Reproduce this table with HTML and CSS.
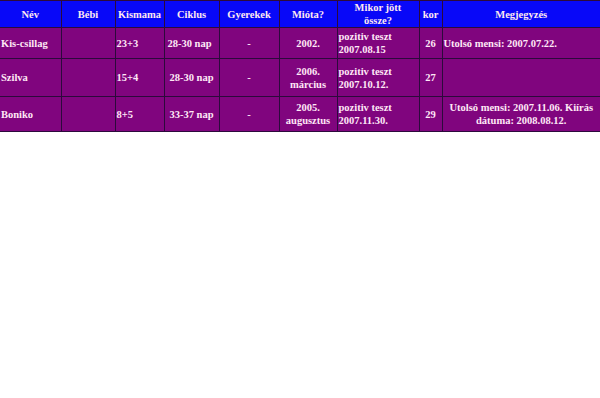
FILE: index.html
```html
<!DOCTYPE html>
<html lang="hu">
<head>
<meta charset="utf-8">
<title>Kismamák</title>
<link rel="stylesheet" href="styles.css">
</head>
<body>
<table class="tbl">
  <colgroup>
    <col class="c-nev"><col class="c-bebi"><col class="c-kis"><col class="c-cik"><col class="c-gyer"><col class="c-mio"><col class="c-mikor"><col class="c-kor"><col class="c-megj">
  </colgroup>
  <thead>
    <tr class="hrow">
      <th>Név</th><th>Bébi</th><th>Kismama</th><th>Ciklus</th><th>Gyerekek</th><th>Mióta?</th><th>Mikor jött<br>össze?</th><th>kor</th><th>Megjegyzés</th>
    </tr>
  </thead>
  <tbody>
    <tr class="r1">
      <td>Kis-csillag</td><td></td><td>23+3</td><td class="ind">28-30 nap</td><td class="ctr">-</td><td class="ctr">2002.</td><td>pozitiv teszt<br>2007.08.15</td><td class="ctr">26</td><td>Utolsó mensi: 2007.07.22.</td>
    </tr>
    <tr class="r2">
      <td>Szilva</td><td></td><td>15+4</td><td class="ctr">28-30 nap</td><td class="ctr">-</td><td class="ctr">2006.<br>március</td><td>pozitiv teszt<br>2007.10.12.</td><td class="ctr">27</td><td></td>
    </tr>
    <tr class="r3">
      <td>Boniko</td><td></td><td>8+5</td><td class="ctr">33-37 nap</td><td class="ctr">-</td><td class="ctr">2005.<br>augusztus</td><td>pozitiv teszt<br>2007.11.30.</td><td class="ctr">29</td><td class="ctr">Utolsó mensi: 2007.11.06. Kiírás dátuma: 2008.08.12.</td>
    </tr>
  </tbody>
</table>
</body>
</html>
```
FILE: styles.css
```css
html, body {
  margin: 0;
  padding: 0;
  background: #ffffff;
}
.tbl {
  width: 600px;
  table-layout: fixed;
  border-collapse: collapse;
  font-family: "Liberation Serif", "Times New Roman", serif;
  font-weight: bold;
  font-size: 10.5px;
  line-height: 13px;
  color: #ffe8f6;
  border-top: 1px solid #d8d0e8;
  border-bottom: 1px solid #d0b8d8;
}
.c-nev { width: 61px; }
.c-bebi { width: 54px; }
.c-kis { width: 49px; }
.c-cik { width: 55px; }
.c-gyer { width: 60px; }
.c-mio { width: 58px; }
.c-mikor { width: 82px; }
.c-kor { width: 23px; }
.c-megj { width: 158px; }
.tbl th, .tbl td {
  border: 1px solid #2c0a3c;
  padding: 0 1px;
  vertical-align: middle;
  overflow: hidden;
}
.tbl th:first-child, .tbl td:first-child { border-left: 0; }
.tbl th:last-child, .tbl td:last-child { border-right: 0; }
.hrow th {
  background: #0808f8;
  height: 26px;
  text-align: center;
  font-weight: bold;
  color: #ffe8f0;
}
.tbl td {
  background: #80057e;
  text-align: left;
}
.r1 td { height: 30px; }
.r2 td { height: 37px; }
.r3 td { height: 34px; }
.tbl td.ctr { text-align: center; }
.tbl td.ind { padding-left: 3px; }
```
